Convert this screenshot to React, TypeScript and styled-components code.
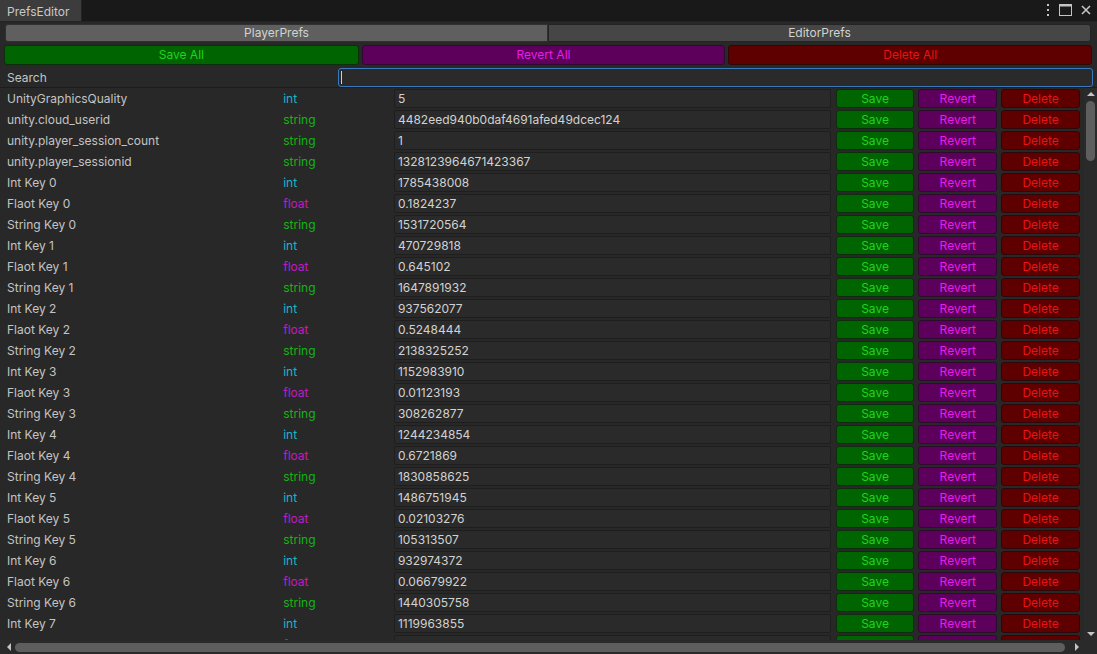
import styled, { createGlobalStyle } from "styled-components";

type PrefType = "int" | "float" | "string";

type PrefRow = {
  key: string;
  type: PrefType;
  value: string;
};

const baseRows: PrefRow[] = [
  { key: "UnityGraphicsQuality", type: "int", value: "5" },
  { key: "unity.cloud_userid", type: "string", value: "4482eed940b0daf4691afed49dcec124" },
  { key: "unity.player_session_count", type: "string", value: "1" },
  { key: "unity.player_sessionid", type: "string", value: "1328123964671423367" },
];

const generated: [string, string, string][] = [
  ["1785438008", "0.1824237", "1531720564"],
  ["470729818", "0.645102", "1647891932"],
  ["937562077", "0.5248444", "2138325252"],
  ["1152983910", "0.01123193", "308262877"],
  ["1244234854", "0.6721869", "1830858625"],
  ["1486751945", "0.02103276", "105313507"],
  ["932974372", "0.06679922", "1440305758"],
  ["1119963855", "0.0328302", "1961054216"],
];

const rows: PrefRow[] = [
  ...baseRows,
  ...generated.flatMap(([i, f, s], n) => [
    { key: `Int Key ${n}`, type: "int" as PrefType, value: i },
    { key: `Flaot Key ${n}`, type: "float" as PrefType, value: f },
    { key: `String Key ${n}`, type: "string" as PrefType, value: s },
  ]),
];

const typeColors: Record<PrefType, string> = {
  int: "#17b6c9",
  float: "#c21ac2",
  string: "#14b414",
};

const variants = {
  save: { bg: "#006400", border: "#0b2e0b", color: "#1fd41f" },
  revert: { bg: "#5c005c", border: "#2e0b2e", color: "#e81ee8" },
  delete: { bg: "#5e0000", border: "#2e0808", color: "#e61414" },
};

type Variant = keyof typeof variants;

export default function App() {
  return (
    <>
      <GlobalStyle />
      <Window>
        <TitleBar>
          <Tab>PrefsEditor</Tab>
          <WindowIcons>
            <svg width="4" height="12" viewBox="0 0 4 12">
              <rect x="1" y="0" width="2" height="2" fill="#c4c4c4" />
              <rect x="1" y="5" width="2" height="2" fill="#c4c4c4" />
              <rect x="1" y="10" width="2" height="2" fill="#c4c4c4" />
            </svg>
            <svg width="13" height="12" viewBox="0 0 13 12">
              <rect x="0.5" y="0.5" width="12" height="11" fill="none" stroke="#c4c4c4" />
              <rect x="0.5" y="0.5" width="12" height="2" fill="#c4c4c4" />
            </svg>
            <svg width="10" height="10" viewBox="0 0 10 10">
              <path d="M1 1 L9 9 M9 1 L1 9" stroke="#c4c4c4" strokeWidth="1.6" />
            </svg>
          </WindowIcons>
        </TitleBar>

        <Toolbar>
          <TabRow>
            <TabButton $active>PlayerPrefs</TabButton>
            <TabButton>EditorPrefs</TabButton>
          </TabRow>
          <AllRow>
            <ActionButton $variant="save" $grow={354}>Save All</ActionButton>
            <ActionButton $variant="revert" $grow={363}>Revert All</ActionButton>
            <ActionButton $variant="delete" $grow={363}>Delete All</ActionButton>
          </AllRow>
          <SearchRow>
            <SearchLabel>Search</SearchLabel>
            <SearchInput>
              <Caret />
            </SearchInput>
          </SearchRow>
        </Toolbar>

        <ListArea>
          <Viewport>
            {rows.map((r) => (
              <Row key={r.key}>
                <KeyCell>{r.key}</KeyCell>
                <TypeCell $type={r.type}>{r.type}</TypeCell>
                <ValueField>{r.value}</ValueField>
                <RowButton $variant="save">Save</RowButton>
                <RowButton $variant="revert">Revert</RowButton>
                <RowButton $variant="delete">Delete</RowButton>
              </Row>
            ))}
          </Viewport>
          <VScroll>
            <Arrow $dir="up" />
            <VTrack>
              <VThumb />
            </VTrack>
            <Arrow $dir="down" />
          </VScroll>
          <HScroll>
            <Arrow $dir="left" />
            <HThumb />
            <Arrow $dir="right" />
          </HScroll>
          <Corner />
        </ListArea>
      </Window>
    </>
  );
}

const GlobalStyle = createGlobalStyle`
  html, body {
    margin: 0;
    padding: 0;
    background: #282828;
    overflow: hidden;
  }
  * {
    box-sizing: border-box;
  }
`;

const Window = styled.div`
  width: 1097px;
  height: 654px;
  display: flex;
  flex-direction: column;
  background: #282828;
  font-family: Inter, "Noto Sans", "Liberation Sans", sans-serif;
  font-size: 12px;
  color: #c4c4c4;
`;

const TitleBar = styled.div`
  height: 22px;
  display: flex;
  align-items: flex-end;
  justify-content: space-between;
  background: #191919;
  border-bottom: 1px solid #232323;
`;

const Tab = styled.div`
  width: 82px;
  height: 22px;
  display: flex;
  align-items: center;
  padding-left: 7px;
  padding-top: 1px;
  background: #3c3c3c;
  border-top: 1px solid #3a79bb;
  border-right: 1px solid #232323;
  font-size: 12px;
  color: #c8c8c8;
`;

const WindowIcons = styled.div`
  display: flex;
  align-items: center;
  gap: 9px;
  height: 22px;
  padding-right: 6px;
  padding-bottom: 1px;
`;

const Toolbar = styled.div`
  display: flex;
  flex-direction: column;
  gap: 3px;
  padding: 2px 4px 0 4px;
  background: #282828;
`;

const TabRow = styled.div`
  display: flex;
  height: 18px;
  margin: 0 2px 0 1px;
`;

const TabButton = styled.div<{ $active?: boolean }>`
  flex: 1;
  display: flex;
  align-items: center;
  justify-content: center;
  background: ${(p) => (p.$active ? "#5f5f5f" : "#464646")};
  border: 1px solid ${(p) => (p.$active ? "#303030" : "#242424")};
  border-radius: ${(p) => (p.$active ? "3px 0 0 3px" : "0 3px 3px 0")};
  color: #d2d2d2;
  line-height: 1;
`;

const AllRow = styled.div`
  display: flex;
  gap: 3px;
  height: 20px;
  margin-right: 1px;
`;

const ActionButton = styled.div<{ $variant: Variant; $grow: number }>`
  flex: ${(p) => p.$grow} 1 0;
  display: flex;
  align-items: center;
  justify-content: center;
  background: ${(p) => variants[p.$variant].bg};
  border: 1px solid ${(p) => variants[p.$variant].border};
  border-radius: 3px;
  color: ${(p) => variants[p.$variant].color};
  line-height: 1;
`;

const SearchRow = styled.div`
  display: flex;
  align-items: center;
  height: 19px;
`;

const SearchLabel = styled.div`
  width: 334px;
  padding-left: 3px;
  color: #c4c4c4;
`;

const SearchInput = styled.div`
  flex: 1;
  height: 19px;
  background: #2a2a2a;
  border: 1px solid #3a79bb;
  border-radius: 3px;
  display: flex;
  align-items: center;
  padding-left: 2px;
`;

const Caret = styled.div`
  width: 1px;
  height: 13px;
  background: #d0d0d0;
`;

const ListArea = styled.div`
  flex: 1;
  min-height: 0;
  display: grid;
  grid-template-columns: 1fr 13px;
  grid-template-rows: 1fr 14px;
  border-top: 1px solid #1c1c1c;
  background: #282828;
`;

const Viewport = styled.div`
  overflow: hidden;
  min-width: 0;
  min-height: 0;
`;

const Row = styled.div`
  height: 21px;
  display: flex;
  align-items: center;
  padding-left: 7px;
`;

const KeyCell = styled.div`
  width: 277px;
  white-space: nowrap;
  color: #c4c4c4;
`;

const TypeCell = styled.div<{ $type: PrefType }>`
  width: 111px;
  color: ${(p) => typeColors[p.$type]};
`;

const ValueField = styled.div`
  width: 438px;
  height: 19px;
  display: flex;
  align-items: center;
  padding-left: 3px;
  background: #2a2a2a;
  border: 1px solid #1e1e1e;
  border-radius: 2px;
  color: #d2d2d2;
  margin-right: 5px;
  white-space: nowrap;
  overflow: hidden;
`;

const RowButton = styled.div<{ $variant: Variant }>`
  width: 79px;
  height: 19px;
  margin-right: 4px;
  display: flex;
  align-items: center;
  justify-content: center;
  background: ${(p) => variants[p.$variant].bg};
  border: 1px solid ${(p) => variants[p.$variant].border};
  border-radius: 3px;
  color: ${(p) => variants[p.$variant].color};
  line-height: 1;
`;

const VScroll = styled.div`
  display: flex;
  flex-direction: column;
  align-items: center;
  background: #2a2a2a;
  padding: 4px 0;
`;

const VTrack = styled.div`
  flex: 1;
  width: 100%;
  display: flex;
  justify-content: center;
  padding-top: 5px;
`;

const VThumb = styled.div`
  width: 9px;
  height: 60px;
  border-radius: 5px;
  background: #5e5e5e;
`;

const HScroll = styled.div`
  display: flex;
  align-items: center;
  gap: 4px;
  background: #2a2a2a;
  padding: 0 5px 0 7px;
`;

const HThumb = styled.div`
  flex: 1;
  height: 9px;
  border-radius: 5px;
  background: #5e5e5e;
  margin-right: 6px;
`;

const Corner = styled.div`
  background: #2a2a2a;
`;

const Arrow = styled.div<{ $dir: "up" | "down" | "left" | "right" }>`
  width: 0;
  height: 0;
  flex-shrink: 0;
  border-style: solid;
  ${(p) =>
    p.$dir === "up"
      ? "border-width: 0 4px 4px 4px; border-color: transparent transparent #c4c4c4 transparent;"
      : p.$dir === "down"
      ? "border-width: 4px 4px 0 4px; border-color: #c4c4c4 transparent transparent transparent;"
      : p.$dir === "left"
      ? "border-width: 4px 4px 4px 0; border-color: transparent #c4c4c4 transparent transparent;"
      : "border-width: 4px 0 4px 4px; border-color: transparent transparent transparent #c4c4c4;"}
`;
